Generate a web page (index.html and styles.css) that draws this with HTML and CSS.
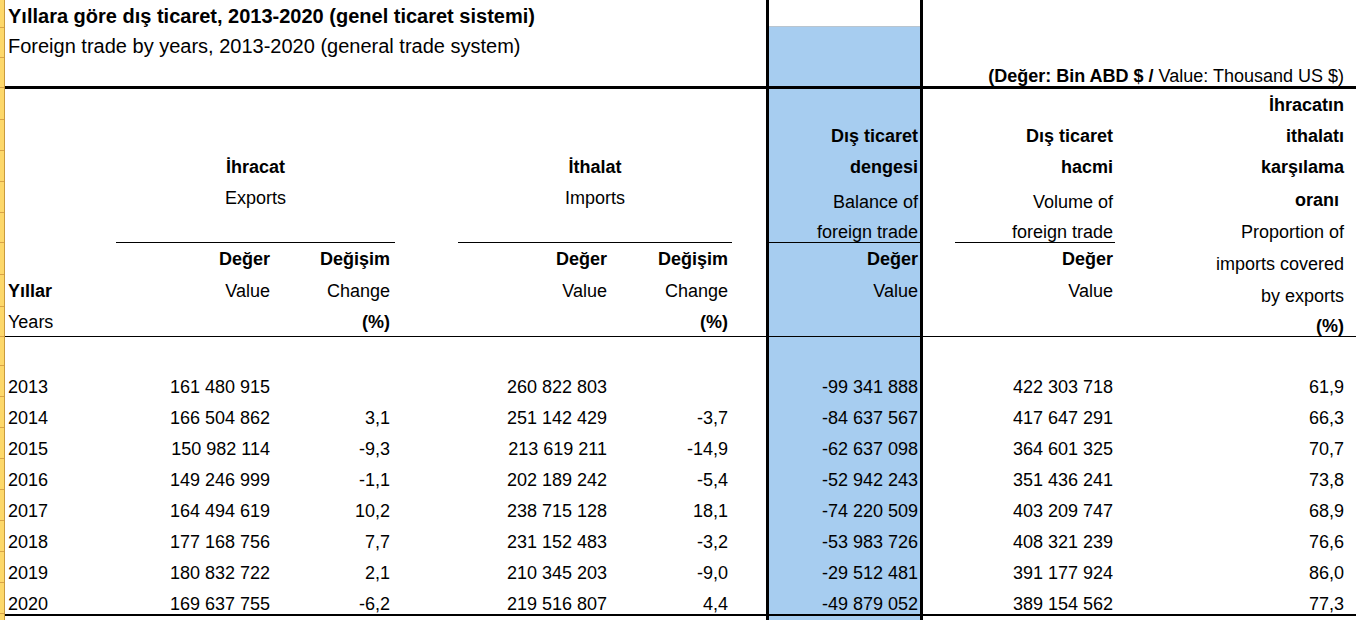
FILE: index.html
```html
<!DOCTYPE html>
<html lang="tr">
<head>
<meta charset="utf-8">
<title>Yıllara göre dış ticaret</title>
<link rel="stylesheet" href="styles.css">
</head>
<body>
<div class="sheet">
  <div class="rowheads">
    <div class="rh h28"></div>
    <div class="rh h30"></div>
    <div class="rh h30"></div>
    <div class="rh h32"></div>
    <div class="rh h31"></div>
    <div class="rh h31"></div>
    <div class="rh h31"></div>
    <div class="rh h30"></div>
    <div class="rh h32"></div>
    <div class="rh h32"></div>
    <div class="rh h30"></div>
    <div class="rh h29"></div>
    <div class="rh h31"></div>
    <div class="rh h31"></div>
    <div class="rh h31"></div>
    <div class="rh h31"></div>
    <div class="rh h31"></div>
    <div class="rh h31"></div>
    <div class="rh h31"></div>
    <div class="rh h31"></div>
    <div class="rh rest"></div>
  </div>

  <div class="grid">
    <div class="row t28 head1">
      <div class="ttl bold">Yıllara göre dış ticaret, 2013-2020 (genel ticaret sistemi)</div>
      <div class="bal bal-top"></div>
    </div>
    <div class="row t30 head1">
      <div class="ttl">Foreign trade by years, 2013-2020 (general trade system)</div>
      <div class="bal"></div>
    </div>
    <div class="row t28">
      <div class="bal"></div>
      <div class="unit b0"><span><b>(Değer: Bin ABD $ /</b> Value: Thousand US $)</span></div>
    </div>
    <div class="rule r3"></div>

    <div class="row t31">
      <div class="bal"></div>
      <div class="rat bold">İhracatın</div>
    </div>
    <div class="row t31">
      <div class="bal bold">Dış ticaret</div>
      <div class="vol bold">Dış ticaret</div>
      <div class="rat bold">ithalatı</div>
    </div>
    <div class="row t31">
      <div class="exp bold">İhracat</div>
      <div class="imp bold">İthalat</div>
      <div class="bal bold">dengesi</div>
      <div class="vol bold">hacmi</div>
      <div class="rat bold">karşılama</div>
    </div>
    <div class="row t31">
      <div class="exp">Exports</div>
      <div class="imp">Imports</div>
      <div class="bal b">Balance of</div>
      <div class="vol b">Volume of</div>
      <div class="rat bold low">oranı&nbsp;</div>
    </div>
    <div class="row t30">
      <div class="exp ul"></div>
      <div class="imp ul"></div>
      <div class="bal b0 ul">foreign trade</div>
      <div class="vol b0 ul">foreign trade</div>
      <div class="rat b">Proportion of</div>
    </div>
    <div class="row t32">
      <div class="ev bold">Değer</div>
      <div class="ec bold">Değişim</div>
      <div class="iv bold">Değer</div>
      <div class="ic bold">Değişim</div>
      <div class="bal bold">Değer</div>
      <div class="vol bold">Değer</div>
      <div class="rat b">imports covered</div>
    </div>
    <div class="row t32">
      <div class="yr bold">Yıllar</div>
      <div class="ev">Value</div>
      <div class="ec">Change</div>
      <div class="iv">Value</div>
      <div class="ic">Change</div>
      <div class="bal">Value</div>
      <div class="vol">Value</div>
      <div class="rat b">by exports</div>
    </div>
    <div class="row t29">
      <div class="yr">Years</div>
      <div class="ec bold">(%)</div>
      <div class="ic bold">(%)</div>
      <div class="bal"></div>
      <div class="rat bold b0">(%)</div>
    </div>
    <div class="rule r1"></div>
    <div class="row t29">
      <div class="bal"></div>
    </div>

    <div class="row t31 d">
      <div class="yr">2013</div><div class="ev">161 480 915</div><div class="ec"></div>
      <div class="iv">260 822 803</div><div class="ic"></div>
      <div class="bal">-99 341 888</div><div class="vol">422 303 718</div><div class="rat">61,9</div>
    </div>
    <div class="row t31 d">
      <div class="yr">2014</div><div class="ev">166 504 862</div><div class="ec">3,1</div>
      <div class="iv">251 142 429</div><div class="ic">-3,7</div>
      <div class="bal">-84 637 567</div><div class="vol">417 647 291</div><div class="rat">66,3</div>
    </div>
    <div class="row t31 d">
      <div class="yr">2015</div><div class="ev">150 982 114</div><div class="ec">-9,3</div>
      <div class="iv">213 619 211</div><div class="ic">-14,9</div>
      <div class="bal">-62 637 098</div><div class="vol">364 601 325</div><div class="rat">70,7</div>
    </div>
    <div class="row t31 d">
      <div class="yr">2016</div><div class="ev">149 246 999</div><div class="ec">-1,1</div>
      <div class="iv">202 189 242</div><div class="ic">-5,4</div>
      <div class="bal">-52 942 243</div><div class="vol">351 436 241</div><div class="rat">73,8</div>
    </div>
    <div class="row t31 d">
      <div class="yr">2017</div><div class="ev">164 494 619</div><div class="ec">10,2</div>
      <div class="iv">238 715 128</div><div class="ic">18,1</div>
      <div class="bal">-74 220 509</div><div class="vol">403 209 747</div><div class="rat">68,9</div>
    </div>
    <div class="row t31 d">
      <div class="yr">2018</div><div class="ev">177 168 756</div><div class="ec">7,7</div>
      <div class="iv">231 152 483</div><div class="ic">-3,2</div>
      <div class="bal">-53 983 726</div><div class="vol">408 321 239</div><div class="rat">76,6</div>
    </div>
    <div class="row t31 d">
      <div class="yr">2019</div><div class="ev">180 832 722</div><div class="ec">2,1</div>
      <div class="iv">210 345 203</div><div class="ic">-9,0</div>
      <div class="bal">-29 512 481</div><div class="vol">391 177 924</div><div class="rat">86,0</div>
    </div>
    <div class="row t31 d">
      <div class="yr">2020</div><div class="ev">169 637 755</div><div class="ec">-6,2</div>
      <div class="iv">219 516 807</div><div class="ic">4,4</div>
      <div class="bal">-49 879 052</div><div class="vol">389 154 562</div><div class="rat">77,3</div>
    </div>
    <div class="rule r2"></div>
    <div class="row tail">
      <div class="bal"></div>
    </div>
  </div>
</div>
</body>
</html>
```

FILE: styles.css
```css
html, body {
  margin: 0;
  padding: 0;
  background: #ffffff;
}

body {
  width: 1356px;
  height: 620px;
  overflow: hidden;
  font-family: "Liberation Sans", Arial, sans-serif;
  font-size: 18px;
  color: #000000;
}

.sheet {
  display: flex;
  height: 620px;
}

/* Excel row headers (yellow strip) */
.rowheads {
  width: 5px;
  flex: none;
  display: flex;
  flex-direction: column;
  background: #fdd86a;
  border-right: 1px solid #c99a3c;
  box-sizing: border-box;
}

.rh {
  box-sizing: border-box;
  border-bottom: 1px solid #d9a347;
  flex: none;
}

.h28 { height: 28px; }
.h29 { height: 29px; }
.h30 { height: 30px; }
.h31 { height: 31px; }
.h32 { height: 32px; }
.rest { flex: 1; border-bottom: none; }

.grid {
  flex: 1;
  display: flex;
  flex-direction: column;
}

.row {
  display: grid;
  grid-template-columns: 111px 159px 120px 63px 154px 120px 34px 157px 32px 160px 233px 8px;
  flex: none;
}

.row > * {
  grid-row: 1;
  display: flex;
  align-items: center;
  white-space: nowrap;
  line-height: 20px;
  box-sizing: border-box;
  min-width: 0;
}

.t28 { height: 28px; }
.t29 { height: 29px; }
.t30 { height: 30px; }
.t31 { height: 31px; }
.t32 { height: 32px; }
.tail { flex: 1; }

.rule {
  flex: none;
  background: #000000;
}
.r1 { height: 1px; }
.r2 { height: 2px; }
.r3 { height: 3px; }

.bold { font-weight: 700; }

.b { align-items: flex-end; padding-bottom: 1px; }
.b0 { align-items: flex-end; }
.low { padding-top: 4px; }
.ul { border-bottom: 1px solid #000000; }

.d > * { align-items: flex-end; }

/* columns */
.ttl {
  grid-column: 1 / span 7;
  padding-left: 3px;
  font-size: 20px;
  line-height: 23px;
}
.head1 > .ttl { align-items: flex-end; }

.unit {
  grid-column: 9 / span 3;
  justify-content: flex-end;
  padding-right: 4px;
}

.yr { grid-column: 1; padding-left: 3px; }
.ev { grid-column: 2; justify-content: flex-end; padding-right: 5px; }
.ec { grid-column: 3; justify-content: flex-end; padding-right: 5px; }
.exp { grid-column: 2 / span 2; justify-content: center; }
.iv { grid-column: 5; justify-content: flex-end; padding-right: 5px; }
.ic { grid-column: 6; justify-content: flex-end; padding-right: 4px; }
.imp { grid-column: 5 / span 2; justify-content: center; }
.vol { grid-column: 10; justify-content: flex-end; padding-right: 2px; }
.rat { grid-column: 11; justify-content: flex-end; padding-right: 4px; }

.bal {
  grid-column: 8;
  justify-content: flex-end;
  padding-right: 2px;
  background: #a7cdf0;
  border-left: 3px solid #000000;
  border-right: 3px solid #000000;
}

.bal-top {
  background: linear-gradient(to bottom, #ffffff 0, #ffffff 26px, #b9c5cf 26px, #b9c5cf 27px, #a7cdf0 27px);
}
```
